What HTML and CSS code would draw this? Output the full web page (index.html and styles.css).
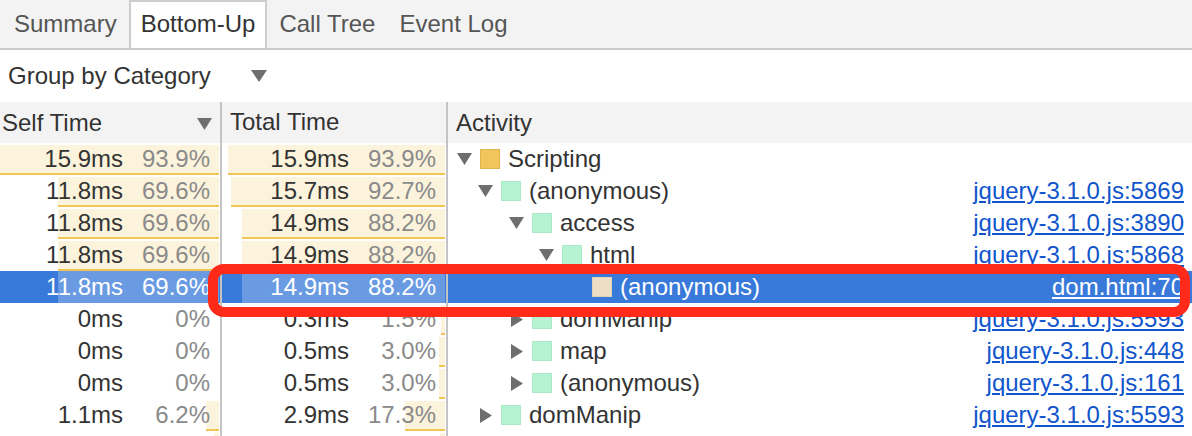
FILE: index.html
```html
<!DOCTYPE html>
<html>
<head>
<meta charset="utf-8">
<link rel="stylesheet" href="styles.css">
</head>
<body>
<div class="tabbar">
  <div class="tab">Summary</div>
  <div class="tab active">Bottom-Up</div>
  <div class="tab">Call Tree</div>
  <div class="tab">Event Log</div>
</div>
<div class="toolbar">
  <span class="group">Group by Category</span>
  <svg class="dd" width="16" height="12" viewBox="0 0 16 12"><path d="M0 0H16L8 12Z" fill="#6e6e6e"/></svg>
</div>
<div class="table">
  <div class="hdr">
    <div class="hcell c-self"><span>Self Time</span><svg class="sort" width="15" height="12" viewBox="0 0 15 12"><path d="M0 0H15L7.5 12Z" fill="#6e6e6e"/></svg></div>
    <div class="hcell c-total">Total Time</div>
    <div class="hcell c-act">Activity</div>
  </div>

  <div class="row">
    <div class="cell c-self"><div class="bar" style="width:219px"></div><span class="ms">15.9ms</span><span class="pct">93.9%</span></div>
    <div class="cell c-total"><div class="bar" style="width:217px"></div><span class="ms">15.9ms</span><span class="pct">93.9%</span></div>
    <div class="cell c-act d0"><span class="tri"><svg width="15" height="12" viewBox="0 0 15 12"><path d="M0 0H15L7.5 12Z"/></svg></span><span class="sq script"></span><span class="name">Scripting</span></div>
  </div>

  <div class="row">
    <div class="cell c-self"><div class="bar" style="width:161px"></div><span class="ms">11.8ms</span><span class="pct">69.6%</span></div>
    <div class="cell c-total"><div class="bar" style="width:214px"></div><span class="ms">15.7ms</span><span class="pct">92.7%</span></div>
    <div class="cell c-act d1"><span class="tri"><svg width="15" height="12" viewBox="0 0 15 12"><path d="M0 0H15L7.5 12Z"/></svg></span><span class="sq js"></span><span class="name">(anonymous)</span><a class="link">jquery-3.1.0.js:5869</a></div>
  </div>

  <div class="row">
    <div class="cell c-self"><div class="bar" style="width:161px"></div><span class="ms">11.8ms</span><span class="pct">69.6%</span></div>
    <div class="cell c-total"><div class="bar" style="width:203px"></div><span class="ms">14.9ms</span><span class="pct">88.2%</span></div>
    <div class="cell c-act d2"><span class="tri"><svg width="15" height="12" viewBox="0 0 15 12"><path d="M0 0H15L7.5 12Z"/></svg></span><span class="sq js"></span><span class="name">access</span><a class="link">jquery-3.1.0.js:3890</a></div>
  </div>

  <div class="row">
    <div class="cell c-self"><div class="bar" style="width:161px"></div><span class="ms">11.8ms</span><span class="pct">69.6%</span></div>
    <div class="cell c-total"><div class="bar" style="width:203px"></div><span class="ms">14.9ms</span><span class="pct">88.2%</span></div>
    <div class="cell c-act d3"><span class="tri"><svg width="15" height="12" viewBox="0 0 15 12"><path d="M0 0H15L7.5 12Z"/></svg></span><span class="sq js"></span><span class="name">html</span><a class="link">jquery-3.1.0.js:5868</a></div>
  </div>

  <div class="row selected">
    <div class="cell c-self"><div class="bar" style="width:161px"></div><span class="ms">11.8ms</span><span class="pct">69.6%</span></div>
    <div class="cell c-total"><div class="bar" style="width:203px"></div><span class="ms">14.9ms</span><span class="pct">88.2%</span></div>
    <div class="cell c-act d4"><span class="tri"></span><span class="sq dom"></span><span class="name">(anonymous)</span><a class="link">dom.html:70</a></div>
  </div>

  <div class="row">
    <div class="cell c-self"><span class="ms">0ms</span><span class="pct">0%</span></div>
    <div class="cell c-total"><div class="bar" style="width:4px"></div><span class="ms">0.3ms</span><span class="pct">1.5%</span></div>
    <div class="cell c-act d2"><span class="tri"><svg width="12" height="15" viewBox="0 0 12 15"><path d="M0 0V15L12 7.5Z"/></svg></span><span class="sq js"></span><span class="name">domManip</span><a class="link">jquery-3.1.0.js:5593</a></div>
  </div>

  <div class="row">
    <div class="cell c-self"><span class="ms">0ms</span><span class="pct">0%</span></div>
    <div class="cell c-total"><div class="bar" style="width:6px"></div><span class="ms">0.5ms</span><span class="pct">3.0%</span></div>
    <div class="cell c-act d2"><span class="tri"><svg width="12" height="15" viewBox="0 0 12 15"><path d="M0 0V15L12 7.5Z"/></svg></span><span class="sq js"></span><span class="name">map</span><a class="link">jquery-3.1.0.js:448</a></div>
  </div>

  <div class="row">
    <div class="cell c-self"><span class="ms">0ms</span><span class="pct">0%</span></div>
    <div class="cell c-total"><div class="bar" style="width:6px"></div><span class="ms">0.5ms</span><span class="pct">3.0%</span></div>
    <div class="cell c-act d2"><span class="tri"><svg width="12" height="15" viewBox="0 0 12 15"><path d="M0 0V15L12 7.5Z"/></svg></span><span class="sq js"></span><span class="name">(anonymous)</span><a class="link">jquery-3.1.0.js:161</a></div>
  </div>

  <div class="row">
    <div class="cell c-self"><div class="bar" style="width:13px"></div><span class="ms">1.1ms</span><span class="pct">6.2%</span></div>
    <div class="cell c-total"><div class="bar" style="width:40px"></div><span class="ms">2.9ms</span><span class="pct">17.3%</span></div>
    <div class="cell c-act d1"><span class="tri"><svg width="12" height="15" viewBox="0 0 12 15"><path d="M0 0V15L12 7.5Z"/></svg></span><span class="sq js"></span><span class="name">domManip</span><a class="link">jquery-3.1.0.js:5593</a></div>
  </div>

  <div class="row">
    <div class="cell c-self"><div class="bar" style="width:5px"></div></div>
    <div class="cell c-total"><div class="bar" style="width:5px"></div></div>
    <div class="cell c-act d1"></div>
  </div>
</div>
<div class="annot"></div>
</body>
</html>
```

FILE: styles.css
```css
* { box-sizing: border-box; }
html, body {
  margin: 0;
  padding: 0;
  width: 1192px;
  height: 436px;
  overflow: hidden;
  background: #fff;
  font-family: "Liberation Sans", Arial, sans-serif;
  font-size: 24px;
  color: #333;
}
body { position: relative; }

.tabbar {
  display: flex;
  height: 50px;
  padding-left: 2px;
  background: #f3f3f3;
  border-bottom: 2px solid #cbcbcb;
}
.tab {
  height: 48px;
  line-height: 43px;
  padding: 0 10px;
  border: 2px solid transparent;
  border-bottom: none;
  color: #555;
  white-space: nowrap;
}
.tab.active {
  background: #fff;
  border-color: #cdcdcd;
  color: #333;
}

.toolbar {
  display: flex;
  align-items: center;
  height: 52px;
  padding-left: 8px;
  line-height: 52px;
  background: #fff;
}
.group { width: 243px; color: #333; }
.dd { display: block; }

.hdr {
  display: grid;
  grid-template-columns: 222px 226px 1fr;
  height: 41px;
  background: #f3f3f3;
  line-height: 40px;
}
.hcell {
  border-right: 2px solid #c4c4c4;
  padding-left: 8px;
  white-space: nowrap;
}
.hcell.c-self {
  padding-left: 2px;
  padding-right: 8px;
  display: flex;
  justify-content: space-between;
  align-items: center;
}
.hcell.c-act { border-right: none; }
.sort { display: block; margin-top: 2px; }

.row {
  display: grid;
  grid-template-columns: 222px 226px 1fr;
  height: 32px;
  line-height: 32px;
}
.cell {
  position: relative;
  height: 32px;
  white-space: nowrap;
}
.cell.c-self, .cell.c-total {
  border-right: 2px solid #c4c4c4;
  display: flex;
  justify-content: flex-end;
  padding-right: 10px;
}
.bar {
  position: absolute;
  right: 1px;
  top: 2px;
  bottom: 0;
  background: #fcf3dc;
  border-bottom: 2px solid #f1c453;
}
.ms { position: relative; color: #333; }
.pct {
  position: relative;
  width: 87px;
  text-align: right;
  color: #8a8a8a;
}
.c-act {
  display: flex;
  align-items: center;
  padding-right: 8px;
}
.d0 { padding-left: 9px; }
.d1 { padding-left: 30px; }
.d2 { padding-left: 61px; }
.d3 { padding-left: 91px; }
.d4 { padding-left: 121px; }
.tri {
  width: 23px;
  height: 32px;
  display: flex;
  align-items: center;
  flex: none;
}
.tri svg { display: block; fill: #6e6e6e; }
.tri svg[width="12"] { margin-left: 2px; }
.sq {
  width: 20px;
  height: 20px;
  flex: none;
  margin-right: 8px;
  border: 1px solid;
}
.sq.script { background: #f1c55b; border-color: #e2b44c; }
.sq.js { background: #b7f3d3; border-color: #a8eac6; }
.sq.dom { background: #ecdfc6; border-color: #e0d2b6; }
.name { color: #333; }
.link {
  margin-left: auto;
  color: #1155cc;
  text-decoration: underline;
  text-decoration-thickness: 2px;
  text-underline-offset: 2px;
}

.row.selected { background: #3879d9; }
.row.selected .bar {
  background: #6a9be2;
  border-bottom: none;
  top: 0;
}
.row.selected .ms,
.row.selected .pct,
.row.selected .name,
.row.selected .link { color: #fff; }

.annot {
  position: absolute;
  left: 208px;
  top: 264px;
  width: 982px;
  height: 53px;
  border: 10px solid #ff2a1a;
  border-radius: 16px;
  z-index: 10;
}
```
